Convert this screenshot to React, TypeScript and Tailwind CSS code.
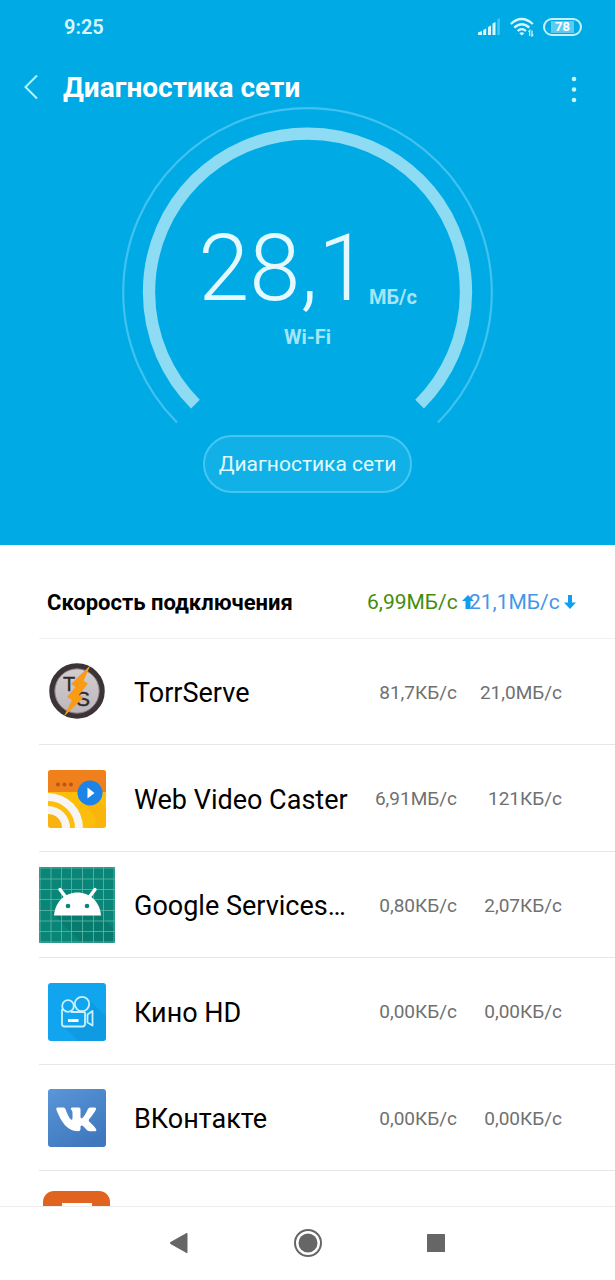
import React from 'react';

type AppRow = {
  name: string;
  up: string;
  down: string;
  icon: React.ReactNode;
};

function TorrServeIcon() {
  return (
    <svg viewBox="0 0 58 58" className="w-[58px] h-[58px]" aria-hidden="true">
      <defs>
        <linearGradient id="ts-face" x1="0" y1="0" x2="0" y2="1">
          <stop offset="0" stopColor="#d4cfd2" />
          <stop offset="1" stopColor="#bcb4b9" />
        </linearGradient>
      </defs>
      <circle cx="29" cy="28" r="25" fill="url(#ts-face)" stroke="#3b3336" strokeWidth="5.5" />
      <circle cx="29" cy="28" r="22.2" fill="none" stroke="#837b7f" strokeWidth="1" />
      <text x="15" y="28" fontSize="20" fill="#2e2a2c" stroke="#2e2a2c" strokeWidth="0.4" fontFamily="Liberation Sans, sans-serif">T</text>
      <text x="28" y="43" fontSize="21" fill="#2e2a2c" stroke="#2e2a2c" strokeWidth="0.4" fontFamily="Liberation Sans, sans-serif">S</text>
      <path d="M42.5 2 L23 21 L27.5 24 L19 34 L24 37 L15.5 54 L35.5 34.5 L31 32 L40 20.5 L35.5 18 Z" fill="#fb9a14" />
    </svg>
  );
}

function WebVideoCasterIcon() {
  return (
    <svg viewBox="0 0 58 58" className="w-[58px] h-[58px]" aria-hidden="true">
      <defs>
        <clipPath id="wvc-clip">
          <rect width="58" height="58" rx="3" />
        </clipPath>
      </defs>
      <g clipPath="url(#wvc-clip)">
        <rect width="58" height="58" fill="#fdbd0b" />
        <rect width="58" height="22" fill="#f0801c" />
        <path d="M33 31 L51 31 L58 38 V58 H46 L48 48 Z" fill="#f7ad0c" opacity="0.5" />
        <circle cx="0" cy="58" r="35" fill="#f7f5f3" />
        <circle cx="0" cy="58" r="27" fill="#fdbd0b" />
        <circle cx="0" cy="58" r="22" fill="#f7f5f3" />
        <circle cx="0" cy="58" r="14" fill="#f9b310" />
      </g>
      <circle cx="10" cy="14.500" r="2" fill="#b8561a" />
      <circle cx="16.500" cy="14.500" r="2" fill="#b8561a" />
      <circle cx="23" cy="14.500" r="2" fill="#b8561a" />
      <circle cx="42" cy="23" r="12.500" fill="#1c83e8" />
      <path d="M39.500 17.500 L46.500 23 L39.500 28.500 Z" fill="#fff" />
    </svg>
  );
}

function GoogleServicesIcon() {
  return (
    <svg viewBox="0 0 76 76" className="w-[76px] h-[76px]" aria-hidden="true">
      <rect width="76" height="76" fill="#098677" />
      <path d="M15 48 H61 L76 63 V76 H43 Z" fill="#067567" opacity="0.55" />
      <path
        d="M1 0V76 M12 0V76 M22.500 0V76 M32.500 0V76 M43.500 0V76 M54.500 0V76 M64.500 0V76 M75 0V76 M0 1H76 M0 12H76 M0 22.500H76 M0 32.500H76 M0 43.500H76 M0 54H76 M0 64.500H76 M0 75H76"
        stroke="#62b8a9"
        strokeWidth="0.8"
      />
      <path d="M15 48.500 C16 35 26 25.500 38.500 25.500 S61 35 62 48.500 Z" fill="#fff" />
      <path d="M21 22.500 L27.500 31 M56 22.500 L49.500 31" stroke="#fff" strokeWidth="3.400" strokeLinecap="round" />
      <circle cx="29" cy="39" r="2.300" fill="#098677" />
      <circle cx="48" cy="39" r="2.300" fill="#098677" />
    </svg>
  );
}

function KinoIcon() {
  return (
    <svg viewBox="0 0 58 58" className="w-[58px] h-[58px]" aria-hidden="true">
      <rect width="58" height="58" rx="3" fill="#11a5f0" />
      <path d="M41 17 L58 33 V55 Q58 58 55 58 H30 L15 43 L36 42 L43 30 Z" fill="#0d8fd8" opacity="0.5" />
      <g fill="none" stroke="#c9f1ff" strokeWidth="1.800" strokeLinejoin="round">
        <circle cx="20" cy="23" r="5.800" />
        <circle cx="34" cy="21" r="7.200" />
        <path d="M14 26 V41 Q14 43.500 16.500 43.500 H34.500 Q37 43.500 37 41 V29 M23 29 H37" />
        <path d="M39.500 31.500 L44.500 28 V42.500 L39.500 39.500 Z" />
      </g>
      <rect x="20" y="36" width="10.500" height="3" fill="#fff" />
    </svg>
  );
}

function VkIcon() {
  return (
    <svg viewBox="0 0 58 58" className="w-[58px] h-[58px]" aria-hidden="true">
      <defs>
        <linearGradient id="vk-bg" x1="0" y1="0" x2="0.6" y2="1">
          <stop offset="0" stopColor="#5b96d8" />
          <stop offset="1" stopColor="#3f78be" />
        </linearGradient>
      </defs>
      <rect width="58" height="58" rx="3" fill="url(#vk-bg)" />
      <path
        d="M9.500 18.500 H15.500 Q17 18.500 17.600 20.200 C19.200 25 21 28.800 23 30.500 C24 31.200 24.500 30.500 24.500 28.500 V23.500 C24.400 21.200 23 20.800 22.800 20 C22.800 19 23.500 18.500 24.500 18.500 H31 Q32.500 18.500 32.500 20.200 V27.500 C32.500 29.500 33.600 29.800 34.600 28.800 C36.800 26.500 38.600 23.200 39.800 20.200 Q40.500 18.500 42.200 18.500 H46.500 Q48.700 18.500 47.800 20.700 C46.500 23.800 42 29 41.200 30.200 C40.500 31.200 40.600 31.800 41.500 32.800 C43 34.500 46.500 37.500 48 40 Q49.200 42.300 46.500 42.300 H41.500 Q39.800 42.300 38.300 40.500 C36 37.800 34.800 36.500 33.700 36.500 C32.600 36.500 32.500 37.200 32.500 38.500 V40.200 Q32.500 42.300 30 42.300 C23 42.300 17.500 38 13.600 31.500 C11.200 27.500 9 22.500 8.300 20.200 Q7.900 18.500 9.500 18.500 Z"
        fill="#fff"
      />
    </svg>
  );
}

function OrangeIcon() {
  return (
    <svg viewBox="0 0 68 68" className="w-[68px] h-[68px]" aria-hidden="true">
      <rect width="67" height="68" rx="11" fill="#e0641f" />
      <rect x="19" y="12" width="30" height="44" fill="#fff" />
    </svg>
  );
}

const apps: AppRow[] = [
  { name: 'TorrServe', up: '81,7КБ/с', down: '21,0МБ/с', icon: <TorrServeIcon /> },
  { name: 'Web Video Caster', up: '6,91МБ/с', down: '121КБ/с', icon: <WebVideoCasterIcon /> },
  { name: 'Google Services…', up: '0,80КБ/с', down: '2,07КБ/с', icon: <GoogleServicesIcon /> },
  { name: 'Кино HD', up: '0,00КБ/с', down: '0,00КБ/с', icon: <KinoIcon /> },
  { name: 'ВКонтакте', up: '0,00КБ/с', down: '0,00КБ/с', icon: <VkIcon /> },
  { name: '', up: '', down: '', icon: <OrangeIcon /> },
];

function StatusBar() {
  return (
    <div className="flex h-[54px] items-center justify-between pl-16 pr-[33px]">
      <span className="text-xl font-semibold text-[#d8f7ff]">9:25</span>
      <div className="flex items-center gap-[9px]">
        <svg viewBox="0 0 24 18" className="h-[18px] w-6" fill="#d8f7ff" aria-hidden="true">
          <path d="M1 17 V14.500 L5 13 V17 Z" />
          <path d="M6.200 17 V12 L9.200 10.500 V17 Z" />
          <path d="M11 17 V9 L14 7.500 V17 Z" />
          <path d="M15.500 17 V5.500 L18.500 4 V17 Z" />
          <path d="M20.300 17 V1.500 L22.800 0 V17 Z" opacity="0.35" />
        </svg>
        <svg viewBox="0 0 24 20" className="h-5 w-6" fill="none" stroke="#d8f7ff" strokeWidth="2.300" aria-hidden="true">
          <path d="M0.800 7 Q11.500 -3 22.800 7" />
          <path d="M4.300 10.600 Q11.800 3.800 19.300 10.600" />
          <path d="M7.600 14 Q11.800 10.300 16 14" />
          <path d="M9.300 16.200 Q11.800 14.300 14.300 16.200 L11.800 18.500 Z" fill="#d8f7ff" stroke="none" />
          <path d="M19.700 19 V13.500 L18.500 15 M22 13.500 V19 L23.200 17.500" strokeWidth="1.200" />
        </svg>
        <span className="flex h-[18px] w-[39px] items-center justify-center rounded-full border-2 border-[#c6f1fd]">
          <span className="bg-[#5dcaf0] px-1 text-[13px] leading-3 font-bold text-white">78</span>
        </span>
      </div>
    </div>
  );
}

function Gauge() {
  return (
    <div className="mx-auto grid w-[371px] *:col-start-1 *:row-start-1">
      <svg viewBox="0 0 371 318" className="w-full" fill="none" aria-hidden="true">
        <path d="M55 316.500 A184.300 184.300 0 1 1 316 316.500" stroke="#40c2f1" strokeWidth="2.200" />
        <path d="M73.400 298.100 A158.500 158.500 0 1 1 297.600 298.100" stroke="#8edcf4" strokeWidth="12.300" />
      </svg>
      <div className="flex flex-col items-center pt-[108px]">
        <p className="flex items-end">
          <span className="text-[92px] leading-[110px] font-light text-[#e3f9ff]">28,1</span>
          <span className="pb-[13px] text-xl leading-7 font-bold text-[#a5e5f9]">МБ/с</span>
        </p>
        <p className="text-xl leading-[26px] font-bold text-[#a5e5f9]">Wi-Fi</p>
      </div>
    </div>
  );
}

function SpeedTable() {
  return (
    <div className="pl-[39px]">
      <table className="w-full table-fixed">
        <thead>
          <tr className="h-[93px] border-b border-[#f2f2f2] *:pt-[22px]">
            <th scope="col" className="pl-2 text-left text-[22px] font-bold whitespace-nowrap text-black">
              Скорость подключения
            </th>
            <th scope="col" className="w-[110px] pl-[10px] font-normal">
              <span className="flex items-center gap-[3px] text-[21px] whitespace-nowrap text-[#438d0b]">
                6,99МБ/с
                <svg viewBox="0 0 14 14" className="h-3.5 w-3.5 shrink-0" fill="#109eee" aria-label="вверх">
                  <path d="M7 0 L13 6 H9.500 V14 H4.500 V6 H1 Z" />
                </svg>
              </span>
            </th>
            <th scope="col" className="w-[148px] pl-[2px] font-normal">
              <span className="flex items-center gap-[3px] text-[21px] whitespace-nowrap text-[#4397e8]">
                21,1МБ/с
                <svg viewBox="0 0 14 14" className="h-3.5 w-3.5 shrink-0" fill="#109eee" aria-label="вниз">
                  <path d="M7 14 L13 7.500 H9 V0 H5 V7.500 H1 Z" />
                </svg>
              </span>
            </th>
          </tr>
        </thead>
        <tbody>
          {apps.map((app, i) => (
            <tr key={i} className="h-[106px] border-b border-[#e6e6e6] even:h-[107px]">
              <td className="pt-0.5">
                <div className="flex items-center gap-[19px]">
                  <span className="flex w-[76px] shrink-0 justify-center">{app.icon}</span>
                  <span className="pt-0.5 text-[27px] leading-8 whitespace-nowrap text-black">{app.name}</span>
                </div>
              </td>
              <td className="pt-1 pr-[10px] text-right text-[19px] whitespace-nowrap text-[#707070]">{app.up}</td>
              <td className="pt-1 pr-[53px] text-right text-[19px] whitespace-nowrap text-[#707070]">{app.down}</td>
            </tr>
          ))}
        </tbody>
      </table>
    </div>
  );
}

export default function App() {
  return (
    <div className="flex h-screen flex-col bg-white font-['Roboto',sans-serif]">
      <header className="shrink-0 bg-[#00abe5] pb-[52px]">
        <StatusBar />
        <div className="mt-4 flex h-9 items-center pr-[34px] pl-6">
          <button type="button" aria-label="Назад" className="w-[39px] shrink-0">
            <svg viewBox="0 0 14 26" className="h-[26px] w-3.5" fill="none" stroke="#b5f4ff" strokeWidth="2">
              <path d="M13 0.500 L1.500 12 L13 23.500" />
            </svg>
          </button>
          <h1 className="flex-1 text-[28px] leading-9 font-bold text-white">Диагностика сети</h1>
          <button type="button" aria-label="Меню">
            <svg viewBox="0 0 14 30" className="h-[30px] w-3.5" fill="#c6f5ff">
              <circle cx="7" cy="6" r="2.300" />
              <circle cx="7" cy="16.500" r="2.300" />
              <circle cx="7" cy="27" r="2.300" />
            </svg>
          </button>
        </div>
        <Gauge />
        <div className="mt-[11px] flex justify-center">
          <button
            type="button"
            className="h-[58px] rounded-full border-2 border-[#45c5f2] bg-[#11b0e7] px-[14px] pt-0.5 text-[21px] text-[#e0faff]"
          >
            Диагностика сети
          </button>
        </div>
      </header>

      <main className="min-h-0 flex-1 overflow-hidden">
        <SpeedTable />
      </main>

      <nav className="flex h-[74px] shrink-0 items-center justify-center border-t border-[#ececec] bg-white pb-0.5">
        <button type="button" aria-label="Назад" className="flex w-32 justify-center">
          <svg viewBox="0 0 20 22" className="h-[22px] w-5" fill="#666">
            <path d="M16.500 1 Q17.500 0.500 17.500 2 V20 Q17.500 21.500 16.500 21 L0.500 12 Q-0.500 11 0.500 10 Z" />
          </svg>
        </button>
        <button type="button" aria-label="Домой" className="flex w-32 justify-center">
          <svg viewBox="0 0 28 28" className="h-7 w-7">
            <circle cx="14" cy="14" r="13" fill="none" stroke="#666" strokeWidth="2" />
            <circle cx="14" cy="14" r="9.500" fill="#666" />
          </svg>
        </button>
        <button type="button" aria-label="Недавние" className="flex w-32 justify-center">
          <svg viewBox="0 0 18 18" className="h-[18px] w-[18px]">
            <rect width="18" height="18" rx="0.500" fill="#666" />
          </svg>
        </button>
      </nav>
    </div>
  );
}
